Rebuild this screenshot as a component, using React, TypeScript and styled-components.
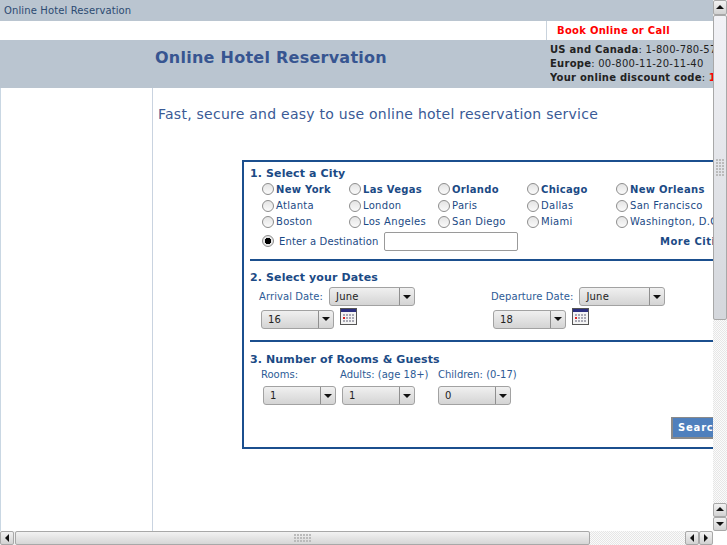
import React from 'react';
import styled, { createGlobalStyle } from 'styled-components';

const GlobalStyle = createGlobalStyle`
  html, body {
    margin: 0;
    padding: 0;
    width: 727px;
    height: 545px;
    overflow: hidden;
    background: #fff;
    font-family: 'DejaVu Sans', Verdana, sans-serif;
  }
`;

const cityRows = [
  [
    { name: 'New York', bold: true },
    { name: 'Las Vegas', bold: true },
    { name: 'Orlando', bold: true },
    { name: 'Chicago', bold: true },
    { name: 'New Orleans', bold: true },
  ],
  [{ name: 'Atlanta' }, { name: 'London' }, { name: 'Paris' }, { name: 'Dallas' }, { name: 'San Francisco' }],
  [{ name: 'Boston' }, { name: 'Los Angeles' }, { name: 'San Diego' }, { name: 'Miami' }, { name: 'Washington, D.C.' }],
];

const Arrow = ({ dir }: { dir: 'up' | 'down' | 'left' | 'right' }) => {
  const points = {
    up: '1,6 9,6 5,2',
    down: '1,3 9,3 5,7',
    left: '7,1 7,9 3,5',
    right: '3,1 3,9 7,5',
  }[dir];
  return (
    <svg width="10" height="10" viewBox="0 0 10 10">
      <polygon points={points} fill="#111" />
    </svg>
  );
};

const Calendar = () => (
  <svg width="17" height="17" viewBox="0 0 17 17">
    <rect x="0.5" y="0.5" width="16" height="16" fill="#f4f4f4" stroke="#555" />
    <rect x="1" y="1" width="15" height="3" fill="#2b2f7f" />
    {[2, 5, 8, 11].map((x) =>
      [6, 9, 12].map((y) => (
        <rect key={`${x}-${y}`} x={x + 1} y={y} width="2" height="2" fill={x === 2 && y === 9 ? '#d22' : '#a9a9b4'} />
      )),
    )}
  </svg>
);

const Dropdown = ({ value, width }: { value: string; width: number }) => (
  <SelectBox $width={width}>
    <SelectValue>{value}</SelectValue>
    <SelectButton>
      <Arrow dir="down" />
    </SelectButton>
  </SelectBox>
);

const App = () => {
  return (
    <Screen>
      <GlobalStyle />
      <Viewport>
        <TopBar>Online Hotel Reservation</TopBar>
        <CallRow>
          <CallCell>Book Online or Call</CallCell>
        </CallRow>
        <HeaderBand>
          <SiteTitle>Online Hotel Reservation</SiteTitle>
          <ContactInfo>
            <div>
              <b>US and Canada</b>: 1-800-780-5733
            </div>
            <div>
              <b>Europe</b>: 00-800-11-20-11-40
            </div>
            <div>
              <b>Your online discount code</b>: <DiscountCode>1</DiscountCode>
            </div>
          </ContactInfo>
        </HeaderBand>
        <Body>
          <Sidebar />
          <Main>
            <Tagline>Fast, secure and easy to use online hotel reservation service</Tagline>
            <SearchBox>
              <CitySection>
                <SectionTitle $top={5}>1. Select a City</SectionTitle>
                <CityGrid>
                  {cityRows.flat().map((city) => (
                    <CityOption key={city.name}>
                      <Radio />
                      <CityName $bold={city.bold}>{city.name}</CityName>
                    </CityOption>
                  ))}
                </CityGrid>
                <DestinationRow>
                  <Radio $checked />
                  <DestinationLabel>Enter a Destination</DestinationLabel>
                  <TextField />
                  <MoreCities>More Cities</MoreCities>
                </DestinationRow>
              </CitySection>
              <DatesSection>
                <SectionTitle $top={10}>2. Select your Dates</SectionTitle>
                <DatesRow>
                  <DateGroup>
                    <DateLine>
                      <FieldLabel>Arrival Date:</FieldLabel>
                      <Dropdown value="June" width={86} />
                    </DateLine>
                    <DayLine>
                      <Dropdown value="16" width={73} />
                      <Calendar />
                    </DayLine>
                  </DateGroup>
                  <DateGroup>
                    <DateLine>
                      <FieldLabel>Departure Date:</FieldLabel>
                      <Dropdown value="June" width={86} />
                    </DateLine>
                    <DayLine>
                      <Dropdown value="18" width={73} />
                      <Calendar />
                    </DayLine>
                  </DateGroup>
                </DatesRow>
              </DatesSection>
              <GuestsSection>
                <SectionTitle $top={11}>3. Number of Rooms &amp; Guests</SectionTitle>
                <GuestsRow>
                  <GuestColumn $width={79}>
                    <GuestLabel $offset={-2}>Rooms:</GuestLabel>
                    <Dropdown value="1" width={73} />
                  </GuestColumn>
                  <GuestColumn $width={96}>
                    <GuestLabel $offset={-2}>Adults: (age 18+)</GuestLabel>
                    <Dropdown value="1" width={73} />
                  </GuestColumn>
                  <GuestColumn $width={90}>
                    <GuestLabel $offset={0}>Children: (0-17)</GuestLabel>
                    <Dropdown value="0" width={73} />
                  </GuestColumn>
                </GuestsRow>
                <SearchRow>
                  <SearchButton>Search</SearchButton>
                </SearchRow>
              </GuestsSection>
            </SearchBox>
          </Main>
        </Body>
      </Viewport>
      <VerticalBar>
        <BarButton $h={15}>
          <Arrow dir="up" />
        </BarButton>
        <VerticalThumb>
          <Grip $cols={3} $rows={6} />
        </VerticalThumb>
        <Track />
        <BarButton $h={14}>
          <Arrow dir="up" />
        </BarButton>
        <BarButton $h={14}>
          <Arrow dir="down" />
        </BarButton>
      </VerticalBar>
      <HorizontalBar>
        <BarButton $w={14}>
          <Arrow dir="left" />
        </BarButton>
        <HorizontalThumb>
          <Grip $cols={6} $rows={3} />
        </HorizontalThumb>
        <Track />
        <BarButton $w={14}>
          <Arrow dir="left" />
        </BarButton>
        <BarButton $w={14}>
          <Arrow dir="right" />
        </BarButton>
      </HorizontalBar>
      <Corner />
    </Screen>
  );
};

const Screen = styled.div`
  display: grid;
  grid-template-columns: 713px 14px;
  grid-template-rows: 531px 14px;
  width: 727px;
  height: 545px;
  overflow: hidden;
`;

const Viewport = styled.div`
  display: flex;
  flex-direction: column;
  overflow: hidden;
  color: #1b4a85;
  white-space: nowrap;
`;

const TopBar = styled.div`
  flex: none;
  height: 21px;
  line-height: 21px;
  padding-left: 4px;
  background: #bac5d0;
  color: #2c4a70;
  font-size: 10px;
  letter-spacing: 0.12px;
`;

const CallRow = styled.div`
  flex: none;
  display: flex;
  justify-content: flex-end;
  height: 19px;
`;

const CallCell = styled.div`
  width: 156px;
  padding-left: 10px;
  border-left: 1px solid #c9d3dd;
  color: #f00;
  font-size: 10px;
  font-weight: bold;
  line-height: 19px;
  letter-spacing: 0.28px;
`;

const HeaderBand = styled.div`
  flex: none;
  display: flex;
  justify-content: space-between;
  height: 48px;
  background: #bac5d0;
`;

const SiteTitle = styled.h1`
  margin: 7px 0 0 155px;
  color: #375591;
  font-size: 16px;
  font-weight: bold;
  line-height: 22px;
  letter-spacing: 0.25px;
`;

const ContactInfo = styled.div`
  width: 163px;
  padding-top: 3px;
  color: #222;
  font-size: 10px;
  line-height: 14px;
  letter-spacing: 0.25px;
  overflow: hidden;
`;

const DiscountCode = styled.b`
  color: #f00;
`;

const Body = styled.div`
  flex: 1;
  display: flex;
  min-height: 0;
`;

const Sidebar = styled.div`
  flex: none;
  width: 151px;
  border-left: 1px solid #c9d7e3;
  border-right: 1px solid #c9d3e0;
`;

const Main = styled.div`
  flex: none;
  width: 600px;
  padding-left: 5px;
`;

const Tagline = styled.h2`
  margin: 18px 0 0;
  color: #3a5a96;
  font-size: 14px;
  font-weight: normal;
  line-height: 17px;
  letter-spacing: 0.25px;
`;

const SearchBox = styled.div`
  width: 520px;
  height: 285px;
  margin: 37px 0 0 84px;
  border: 2px solid #1b4f8e;
`;

const Section = styled.div`
  margin-left: 6px;
`;

const CitySection = styled(Section)`
  height: 97px;
  border-bottom: 2px solid #1b4f8e;
`;

const DatesSection = styled(Section)`
  height: 79px;
  border-bottom: 2px solid #1b4f8e;
`;

const GuestsSection = styled(Section)``;

const SectionTitle = styled.div<{ $top: number }>`
  padding-top: ${({ $top }) => $top}px;
  color: #1b4a85;
  font-size: 11px;
  font-weight: bold;
  line-height: 14px;
  letter-spacing: 0.12px;
`;

const CityGrid = styled.div`
  display: grid;
  grid-template-columns: 87px repeat(4, 89px);
  grid-auto-rows: 16.4px;
  padding-left: 12px;
`;

const CityOption = styled.label`
  display: flex;
  align-items: center;
  gap: 2px;
`;

const Radio = styled.span<{ $checked?: boolean }>`
  flex: none;
  display: block;
  box-sizing: border-box;
  width: 12px;
  height: 12px;
  border: 1px solid #8d8d8d;
  border-radius: 50%;
  background: ${({ $checked }) =>
    $checked ? 'radial-gradient(circle, #000 0, #000 3px, #e6e6e6 3.5px)' : 'linear-gradient(#e4e4e4, #fafafa)'};
`;

const CityName = styled.span<{ $bold?: boolean }>`
  font-size: 10px;
  font-weight: ${({ $bold }) => ($bold ? 'bold' : 'normal')};
  letter-spacing: 0.3px;
`;

const DestinationRow = styled.div`
  display: flex;
  align-items: center;
  height: 19px;
  margin-top: 1.5px;
  padding-left: 12px;
`;

const DestinationLabel = styled.span`
  width: 105px;
  margin-left: 5px;
  font-size: 10px;
  letter-spacing: 0.15px;
`;

const TextField = styled.div`
  box-sizing: border-box;
  width: 134px;
  height: 19px;
  border: 1px solid #9a9a9a;
  border-radius: 2px;
  background: #fff;
`;

const MoreCities = styled.span`
  margin-left: 142px;
  font-size: 10px;
  font-weight: bold;
  letter-spacing: 0.5px;
`;

const DatesRow = styled.div`
  display: flex;
  padding-top: 2px;
`;

const DateGroup = styled.div`
  flex: none;
  width: 223px;
  padding-left: 9px;
`;

const DateLine = styled.div`
  display: flex;
  align-items: center;
  gap: 6px;
  font-size: 10px;
`;

const FieldLabel = styled.span`
  font-size: 10px;
  color: #2d5b96;
  letter-spacing: 0.08px;
`;

const DayLine = styled.div`
  display: flex;
  align-items: flex-start;
  gap: 6px;
  margin: 4px 0 0 2px;

  svg {
    margin-top: -2px;
  }
`;

const SelectBox = styled.div<{ $width: number }>`
  flex: none;
  display: flex;
  box-sizing: border-box;
  width: ${({ $width }) => $width}px;
  height: 19px;
  border: 1px solid #a2a2a2;
  border-radius: 3px;
  background: linear-gradient(#f0f0f0, #d4d4d4);
  color: #222;
`;

const SelectValue = styled.span`
  flex: 1;
  padding-left: 6px;
  font-size: 10px;
  line-height: 18px;
  letter-spacing: 0.2px;
`;

const SelectButton = styled.span`
  flex: none;
  display: flex;
  align-items: center;
  justify-content: center;
  width: 14px;
  border-left: 1px solid #8f8f8f;
`;

const GuestsRow = styled.div`
  display: flex;
  padding-left: 13px;
`;

const GuestColumn = styled.div<{ $width: number }>`
  flex: none;
  width: ${({ $width }) => $width}px;
`;

const GuestLabel = styled.div<{ $offset: number }>`
  height: 18px;
  margin-left: ${({ $offset }) => $offset}px;
  padding-top: 1px;
  color: #2d5b96;
  font-size: 10px;
  line-height: 14px;
`;

const SearchRow = styled.div`
  display: flex;
  padding: 12px 0 0 421px;
`;

const SearchButton = styled.div`
  width: 70px;
  height: 22px;
  border: 1px solid #8a8a8a;
  border-width: 1px 0 2px 2px;
  box-sizing: border-box;
  padding-left: 5px;
  background: #4f80bd;
  color: #fff;
  font-size: 10px;
  font-weight: bold;
  line-height: 19px;
  letter-spacing: 0.8px;
`;

const VerticalBar = styled.div`
  display: flex;
  flex-direction: column;
  background: #f0f0f0;
`;

const HorizontalBar = styled.div`
  display: flex;
  background: #f0f0f0;
`;

const BarButton = styled.div<{ $w?: number; $h?: number }>`
  flex: none;
  display: flex;
  align-items: center;
  justify-content: center;
  box-sizing: border-box;
  width: ${({ $w }) => ($w ? `${$w}px` : 'auto')};
  height: ${({ $h }) => ($h ? `${$h}px` : 'auto')};
  border: 1px solid #a8a8a8;
  border-radius: 2px;
  background: linear-gradient(#f2f2f2, #d2d2d2);
`;

const VerticalThumb = styled.div`
  flex: none;
  display: flex;
  align-items: center;
  justify-content: center;
  box-sizing: border-box;
  height: 305px;
  border: 1px solid #a8a8a8;
  border-radius: 2px;
  background: linear-gradient(#f2f2f6, #d4d7dc);
`;

const HorizontalThumb = styled.div`
  flex: none;
  display: flex;
  align-items: center;
  justify-content: center;
  box-sizing: border-box;
  width: 575px;
  margin-left: 1px;
  border: 1px solid #a8a8a8;
  border-radius: 2px;
  background: linear-gradient(#f2f2f2, #d6d6d6);
`;

const Grip = styled.div<{ $cols: number; $rows: number }>`
  width: ${({ $cols }) => $cols * 3}px;
  height: ${({ $rows }) => $rows * 3}px;
  background: radial-gradient(circle at 1px 1px, #bbb 1px, transparent 1px) 0 0 / 3px 3px;
`;

const Track = styled.div`
  flex: 1;
  background: repeating-conic-gradient(#e6e6e6 0 25%, #fbfbfb 0 50%) 0 0 / 2px 2px;
`;

const Corner = styled.div`
  background: #fff;
`;

export default App;
